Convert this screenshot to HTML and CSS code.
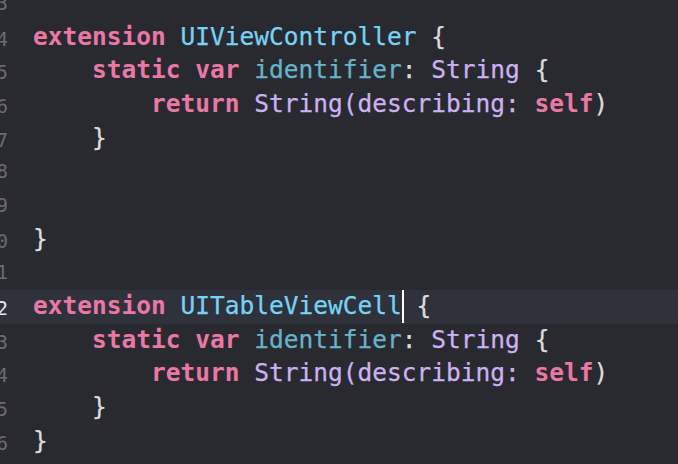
FILE: index.html
```html
<!DOCTYPE html>
<html>
<head>
<meta charset="utf-8">
<link rel="stylesheet" href="styles.css">
</head>
<body>
<div class="editor">
  <div class="line"><span class="ln">3</span><span class="code"></span></div>
  <div class="line"><span class="ln">4</span><span class="code"><span class="kw">extension</span> <span class="ty">UIViewController</span> {</span></div>
  <div class="line"><span class="ln">5</span><span class="code">    <span class="kw">static</span> <span class="kw">var</span> <span class="id">identifier</span>: <span class="cl">String</span> {</span></div>
  <div class="line"><span class="ln">6</span><span class="code">        <span class="kw">return</span> <span class="cl">String(describing:</span> <span class="kw">self</span>)</span></div>
  <div class="line"><span class="ln">7</span><span class="code">    }</span></div>
  <div class="line"><span class="ln">8</span><span class="code"></span></div>
  <div class="line"><span class="ln">9</span><span class="code"></span></div>
  <div class="line"><span class="ln">10</span><span class="code">}</span></div>
  <div class="line"><span class="ln">11</span><span class="code"></span></div>
  <div class="line current"><span class="ln">12</span><span class="code"><span class="kw">extension</span> <span class="ty">UITableViewCell</span><span class="cursor"></span> {</span></div>
  <div class="line"><span class="ln">13</span><span class="code">    <span class="kw">static</span> <span class="kw">var</span> <span class="id">identifier</span>: <span class="cl">String</span> {</span></div>
  <div class="line"><span class="ln">14</span><span class="code">        <span class="kw">return</span> <span class="cl">String(describing:</span> <span class="kw">self</span>)</span></div>
  <div class="line"><span class="ln">15</span><span class="code">    }</span></div>
  <div class="line"><span class="ln">16</span><span class="code">}</span></div>
</div>
</body>
</html>
```
FILE: styles.css
```css
html, body {
  margin: 0;
  padding: 0;
  background: #292a30;
  overflow: hidden;
  height: 100%;
}
.editor {
  margin-top: -13px;
  font-family: "DejaVu Sans Mono", "Liberation Mono", monospace;
}
.line {
  display: flex;
  align-items: baseline;
  height: 33.67px;
  line-height: 33.67px;
}
.line.current {
  background: #2f323a;
}
.ln {
  flex: none;
  width: 40px;
  margin-left: -32px;
  text-align: right;
  font-size: 19px;
  color: #6c6c70;
}
.current .ln {
  color: #e6e6e6;
}
.code {
  padding-left: 25px;
  white-space: pre;
  font-size: 24.5px;
  color: #dcdcdc;
  position: relative;
  top: -1px;
  -webkit-text-stroke: 0.25px currentColor;
}
.kw {
  color: #ea78a7;
  font-weight: bold;
  -webkit-text-stroke: 0;
}
.ty {
  color: #78d2f5;
}
.id {
  color: #67b3cc;
}
.cl {
  color: #ccb2f2;
}
.cursor {
  display: inline-block;
  width: 2px;
  height: 33px;
  background: #ffffff;
  vertical-align: middle;
  margin-right: -2px;
}
```
